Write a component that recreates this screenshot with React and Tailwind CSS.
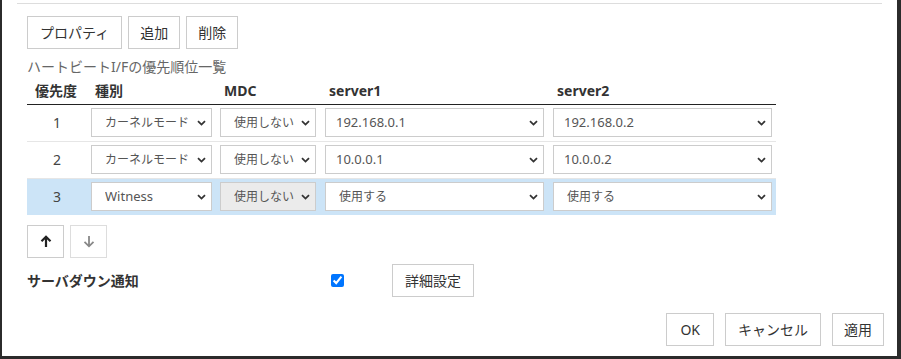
import React from 'react';

const font = { fontFamily: '"Noto Sans", "Noto Sans CJK JP", sans-serif' };

const rows = [
  { n: 1, kind: 'カーネルモード', mdc: '使用しない', s1: '192.168.0.1', s2: '192.168.0.2' },
  { n: 2, kind: 'カーネルモード', mdc: '使用しない', s1: '10.0.0.1', s2: '10.0.0.2' },
  { n: 3, kind: 'Witness', mdc: '使用しない', s1: '使用する', s2: '使用する', selected: true },
];

const Chevron = () => (
  <svg
    className="pointer-events-none absolute right-[6px] top-1/2 -translate-y-1/2"
    width="9"
    height="6"
    viewBox="0 0 9 6"
  >
    <path d="M1 1.2 L4.5 4.6 L8 1.2" fill="none" stroke="#333" strokeWidth="1.8" />
  </svg>
);

// latin = IP addresses / ascii values; the rest are Japanese labels
const Select = ({ value, width, latin, ip, disabled }) => (
  <div className={`relative ${width}`}>
    <select
      value={value}
      disabled={disabled}
      onChange={() => {}}
      className={`block h-[29px] w-full appearance-none border border-[#cccccc] pr-[18px] text-[#555] opacity-100 outline-none ${
        latin ? 'text-[13px]' : 'text-[12px]'
      } ${ip ? 'pl-[10px]' : 'pl-[13px]'} ${disabled ? 'bg-[#ebebeb]' : 'bg-white'}`}
      style={font}
    >
      <option value={value}>{value}</option>
    </select>
    <Chevron />
  </div>
);

const Btn = ({ children, className = '' }) => (
  <button
    className={`h-[33px] border border-[#cccccc] bg-white text-[14px] leading-none text-[#333] ${className}`}
  >
    {children}
  </button>
);

const grid = 'grid grid-cols-[60px_129px_105px_228px_227px]';

export default function App() {
  return (
    <div
      className="box-border flex h-[359px] w-[901px] flex-col overflow-hidden border-b-[3px] border-l-2 border-r-4 border-[#2b2b2b] bg-white text-[#333]"
      style={font}
    >
      <div className="mx-[15px] mt-[3px] h-px bg-[#dddddd]" />

      <div className="pl-[25px]">
        <div className="mt-[12px] flex gap-[6px]">
          <Btn className="px-[12px]">プロパティ</Btn>
          <Btn className="px-[11px]">追加</Btn>
          <Btn className="px-[11px]">削除</Btn>
        </div>

        <div className="mt-[8px] text-[14px] leading-[20px] text-[#666]">ハートビートI/Fの優先順位一覧</div>

        <div className="w-[749px]">
          <div className={`${grid} border-b border-[#222] pb-[3px] pt-[4px] text-[14px] font-bold leading-[20px]`}>
            <div className="pl-[8px]">優先度</div>
            <div className="pl-[8px]">種別</div>
            <div className="pl-[8px]">MDC</div>
            <div className="pl-[8px]">server1</div>
            <div className="pl-[8px]">server2</div>
          </div>

          {rows.map((r) => (
            <div
              key={r.n}
              className={`${grid} items-center pb-[4px] pt-[3px] ${
                r.selected ? 'bg-[#cce4f7]' : 'border-b border-[#e6e6e6]'
              }`}
            >
              <div className="text-center text-[14px] text-[#444]">{r.n}</div>
              <div className="pl-[4px]">
                <Select value={r.kind} width="w-[121px]" latin={r.selected} />
              </div>
              <div className="pl-[4px]">
                <Select value={r.mdc} width="w-[96px]" disabled={r.selected} />
              </div>
              <div className="pl-[4px]">
                <Select value={r.s1} width="w-[219px]" latin={!r.selected} ip={!r.selected} />
              </div>
              <div className="pl-[4px]">
                <Select value={r.s2} width="w-[219px]" latin={!r.selected} ip={!r.selected} />
              </div>
            </div>
          ))}
        </div>

        <div className="mt-[10px] flex gap-[6px]">
          <button className="flex h-[33px] w-[37px] items-center justify-center border border-[#cccccc] bg-white">
            <svg width="12" height="13" viewBox="0 0 12 13">
              <path d="M6 12 V2 M1.5 6.2 L6 1.7 L10.5 6.2" fill="none" stroke="#222" strokeWidth="2.2" />
            </svg>
          </button>
          <button className="flex h-[33px] w-[37px] items-center justify-center border border-[#dddddd] bg-white">
            <svg width="12" height="13" viewBox="0 0 12 13">
              <path d="M6 1 V11 M1.5 6.8 L6 11.3 L10.5 6.8" fill="none" stroke="#888" strokeWidth="1.8" />
            </svg>
          </button>
        </div>

        <div className="mt-[6px] flex items-center">
          <div className="w-[304px] text-[14px] font-bold leading-[20px]">サーバダウン通知</div>
          <input type="checkbox" checked readOnly className="m-0 h-[13px] w-[13px] accent-[#0075ff]" />
          <Btn className="ml-[48px] px-[12px]">詳細設定</Btn>
        </div>
      </div>

      <div className="mt-[16px] flex justify-end gap-[11px] pr-[13px]">
        <Btn className="h-[32px] px-[13px]">OK</Btn>
        <Btn className="h-[32px] px-[12px]">キャンセル</Btn>
        <Btn className="h-[32px] px-[11px]">適用</Btn>
      </div>
    </div>
  );
}
